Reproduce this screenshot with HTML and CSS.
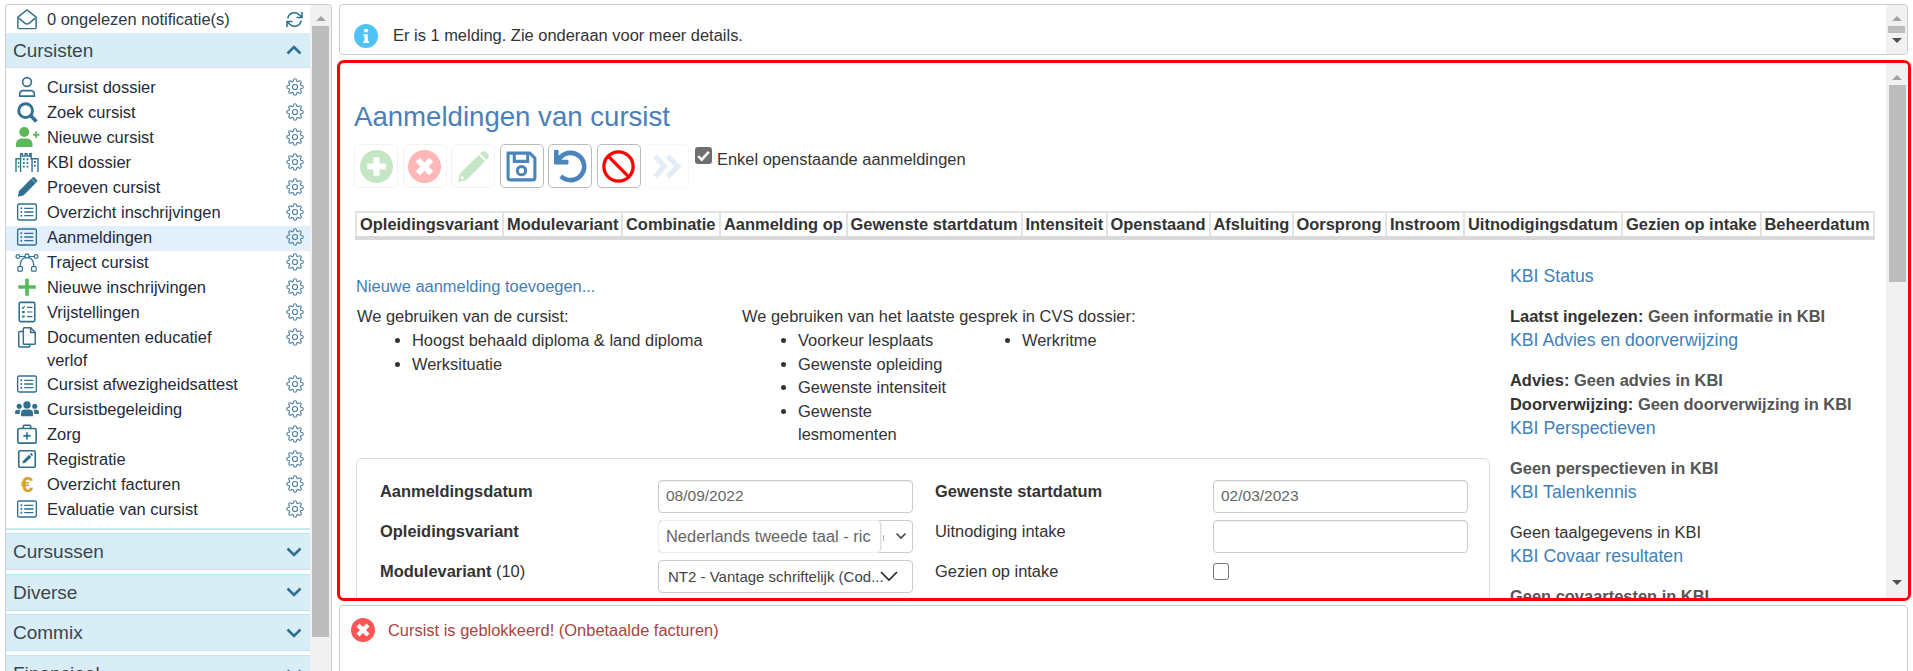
FILE: index.html
```html
<!DOCTYPE html>
<html lang="nl">
<head>
<meta charset="utf-8">
<title>Aanmeldingen van cursist</title>
<link rel="stylesheet" href="styles.css">
</head>
<body>
<svg class="defs" width="0" height="0" aria-hidden="true">
  <symbol id="gear" viewBox="0 0 24 24"><g fill="none" stroke="currentColor" stroke-width="1.5"><circle cx="12" cy="12" r="3.4"/><path d="M19.4 15a1.65 1.65 0 0 0 .33 1.82l.06.06a2 2 0 0 1 0 2.83 2 2 0 0 1-2.83 0l-.06-.06a1.65 1.65 0 0 0-1.82-.33 1.65 1.65 0 0 0-1 1.51V21a2 2 0 0 1-2 2 2 2 0 0 1-2-2v-.09A1.65 1.65 0 0 0 9 19.4a1.65 1.65 0 0 0-1.82.33l-.06.06a2 2 0 0 1-2.83 0 2 2 0 0 1 0-2.83l.06-.06a1.65 1.65 0 0 0 .33-1.82 1.65 1.65 0 0 0-1.51-1H3a2 2 0 0 1-2-2 2 2 0 0 1 2-2h.09A1.65 1.65 0 0 0 4.6 9a1.65 1.65 0 0 0-.33-1.82l-.06-.06a2 2 0 0 1 0-2.83 2 2 0 0 1 2.83 0l.06.06a1.65 1.65 0 0 0 1.82.33H9a1.65 1.65 0 0 0 1-1.51V3a2 2 0 0 1 2-2 2 2 0 0 1 2 2v.09a1.65 1.65 0 0 0 1 1.51 1.65 1.65 0 0 0 1.82-.33l.06-.06a2 2 0 0 1 2.83 0 2 2 0 0 1 0 2.83l-.06.06a1.65 1.65 0 0 0-.33 1.82V9a1.65 1.65 0 0 0 1.51 1H21a2 2 0 0 1 2 2 2 2 0 0 1-2 2h-.09a1.65 1.65 0 0 0-1.51 1z"/></g></symbol>
  <symbol id="list" viewBox="0 0 24 24"><g fill="none" stroke="currentColor" stroke-width="1.5"><rect x="1.8" y="3.3" width="20.4" height="17.4" rx="1.6"/><path d="M9 8h10M9 12h10M9 16h10"/></g><g fill="currentColor"><circle cx="5.8" cy="8" r="1.1"/><circle cx="5.8" cy="12" r="1.1"/><circle cx="5.8" cy="16" r="1.1"/></g></symbol>
  <symbol id="chev-up" viewBox="0 0 16 10"><path d="M1.5 8.5 8 2l6.500 6.500" fill="none" stroke="currentColor" stroke-width="2.6"/></symbol>
  <symbol id="chev-down" viewBox="0 0 16 10"><path d="M1.5 1.5 8 8l6.500-6.500" fill="none" stroke="currentColor" stroke-width="2.6"/></symbol>
</svg>

<div class="app">
  <aside class="side">
    <div class="side-body">
      <div class="notif">
        <svg class="ic" viewBox="0 0 24 24"><g fill="none" stroke="currentColor" stroke-width="1.6"><path d="M2 10 12 2l10 8v11a1.500 1.500 0 0 1-1.500 1.500h-17A1.500 1.500 0 0 1 2 21z"/><path d="M3 11l6.500 5.500c1.500 1.200 3.500 1.200 5 0L21 11"/></g></svg>
        <span class="grow">0 ongelezen notificatie(s)</span>
        <svg class="sync" viewBox="0 0 24 24"><g fill="none" stroke="currentColor" stroke-width="2"><path d="M3.500 10.500A8.600 8.600 0 0 1 18 6l3 3"/><path d="M21.500 2.500V9.500h-7"/><path d="M20.500 13.500A8.600 8.600 0 0 1 6 18l-3-3"/><path d="M2.500 21.500V14.500h7"/></g></svg>
      </div>
      <div class="acc-head first"><span class="grow">Cursisten</span><svg class="chev"><use href="#chev-up"/></svg></div>
      <ul class="menu">
        <li class="item"><svg class="ic" viewBox="0 0 24 24"><g fill="none" stroke="currentColor" stroke-width="1.8"><circle cx="12" cy="6.500" r="4.800"/><path d="M4 22v-2.300A3.700 3.700 0 0 1 7.700 16h8.600a3.700 3.700 0 0 1 3.700 3.700V22z"/></g></svg><span class="grow">Cursist dossier</span><svg class="gear"><use href="#gear"/></svg></li>
        <li class="item"><svg class="ic" viewBox="0 0 24 24"><g fill="none" stroke="currentColor"><circle cx="10.500" cy="10.500" r="7.500" stroke-width="3.200"/><path d="M15.800 15.800l6.500 6.500" stroke-width="4"/></g></svg><span class="grow">Zoek cursist</span><svg class="gear"><use href="#gear"/></svg></li>
        <li class="item"><svg class="ic wide green" viewBox="0 0 26 24"><g fill="currentColor"><circle cx="10" cy="6.500" r="5.500"/><path d="M1 23v-3.500A6 6 0 0 1 7 13.500h6a6 6 0 0 1 6 6V23z"/><path d="M19.500 8.500h2.500V6h2v2.500h2.500v2H24V13h-2v-2.500h-2.500z"/></g></svg><span class="grow">Nieuwe cursist</span><svg class="gear"><use href="#gear"/></svg></li>
        <li class="item"><svg class="ic wide" viewBox="0 0 26 24"><g fill="none" stroke="currentColor" stroke-width="1.500"><path d="M1 23V8.500h5V3h2v2.500h3V3h2v2.500h3V3h1.500v5.500H25V23"/><path d="M6 8.500V23M18.500 8.500V23"/></g><path fill="currentColor" d="M8.500 8h2v2h-2zM12.500 8h2v2h-2zM8.500 12h2v2h-2zM12.500 12h2v2h-2zM8.500 16h2v2h-2zM12.500 16h2v2h-2zM3 12h1.500v2H3zM3 16h1.500v2H3zM20.500 11h2v2h-2zM20.500 15h2v2h-2z"/></svg><span class="grow">KBI dossier</span><svg class="gear"><use href="#gear"/></svg></li>
        <li class="item"><svg class="ic" viewBox="0 0 24 24"><path fill="currentColor" d="M2 22.500l1.300-6.200L16.500 3.100l4.900 4.900L8.200 21.200z"/><path fill="currentColor" d="M17.700 1.900a2 2 0 0 1 2.800 0l2.100 2.100a2 2 0 0 1 0 2.800l-.9.900-4.900-4.900z"/></svg><span class="grow">Proeven cursist</span><svg class="gear"><use href="#gear"/></svg></li>
        <li class="item"><svg class="ic"><use href="#list"/></svg><span class="grow">Overzicht inschrijvingen</span><svg class="gear"><use href="#gear"/></svg></li>
        <li class="item active"><svg class="ic"><use href="#list"/></svg><span class="grow">Aanmeldingen</span><svg class="gear"><use href="#gear"/></svg></li>
        <li class="item"><svg class="ic wide" viewBox="0 0 26 24"><g fill="none" stroke="currentColor" stroke-width="1.300"><rect x="1" y="4" width="4" height="4" rx="2"/><rect x="21" y="4" width="4" height="4" rx="2"/><rect x="11" y="3.500" width="4" height="4" rx="1"/><rect x="3" y="17" width="5" height="5" rx="1"/><rect x="18" y="17" width="5" height="5" rx="1"/><path d="M5 6h6M15 6h6M5.500 17c0-5 2.500-9 6-10M20.500 17c0-5-2.500-9-6-10"/></g></svg><span class="grow">Traject cursist</span><svg class="gear"><use href="#gear"/></svg></li>
        <li class="item"><svg class="ic green" viewBox="0 0 24 24"><path fill="currentColor" d="M10 3h4v7h7.500v4H14v7.500h-4V14H2.500v-4H10z"/></svg><span class="grow">Nieuwe inschrijvingen</span><svg class="gear"><use href="#gear"/></svg></li>
        <li class="item"><svg class="ic" viewBox="0 0 24 24"><g fill="none" stroke="currentColor" stroke-width="1.700"><rect x="3.500" y="1.500" width="17" height="21" rx="1.500"/><path stroke-width="1.300" d="M12 7h6M12 12h6M12 17h6M6.500 7l1 1 2-2.200"/></g><path fill="currentColor" d="M6.500 11h3v2h-3zM6.500 16h3v2h-3z"/></svg><span class="grow">Vrijstellingen</span><svg class="gear"><use href="#gear"/></svg></li>
        <li class="item tall"><svg class="ic" viewBox="0 0 24 24"><g fill="none" stroke="currentColor" stroke-width="1.600"><path d="M9 2h7l5 5v12a1 1 0 0 1-1 1H9a1 1 0 0 1-1-1V3a1 1 0 0 1 1-1z"/><path d="M16 2v5h5M8 6H4a1 1 0 0 0-1 1v15a1 1 0 0 0 1 1h10a1 1 0 0 0 1-1v-2"/></g></svg><span class="grow">Documenten educatief verlof</span><svg class="gear"><use href="#gear"/></svg></li>
        <li class="item"><svg class="ic"><use href="#list"/></svg><span class="grow">Cursist afwezigheidsattest</span><svg class="gear"><use href="#gear"/></svg></li>
        <li class="item"><svg class="ic wide" viewBox="0 0 26 24"><g fill="currentColor"><circle cx="13" cy="7.500" r="4"/><circle cx="4.500" cy="9" r="2.800"/><circle cx="21.500" cy="9" r="2.800"/><path d="M6.500 20v-3.500a4 4 0 0 1 4-4h5a4 4 0 0 1 4 4V20z"/><path d="M0 17.500v-2A2.800 2.800 0 0 1 2.800 12.700H6a6 6 0 0 0-1 3.800v1zM26 17.500v-2a2.800 2.800 0 0 0-2.800-2.800H20a6 6 0 0 1 1 3.800v1z"/></g></svg><span class="grow">Cursistbegeleiding</span><svg class="gear"><use href="#gear"/></svg></li>
        <li class="item"><svg class="ic" viewBox="0 0 24 24"><g fill="none" stroke="currentColor" stroke-width="1.800"><rect x="2" y="6" width="20" height="16" rx="1.500"/><path d="M8 6V3.500A1 1 0 0 1 9 2.500h6a1 1 0 0 1 1 1V6M12 10v8M8 14h8"/></g></svg><span class="grow">Zorg</span><svg class="gear"><use href="#gear"/></svg></li>
        <li class="item"><svg class="ic" viewBox="0 0 24 24"><rect x="3" y="3" width="18" height="18" rx="1.500" fill="none" stroke="currentColor" stroke-width="1.800"/><path fill="currentColor" d="M7 17l.8-3.200 6.500-6.500 2.400 2.400-6.500 6.500zM15 6.600l.7-.7a1 1 0 0 1 1.400 0l1 1a1 1 0 0 1 0 1.400l-.7.7z"/></svg><span class="grow">Registratie</span><svg class="gear"><use href="#gear"/></svg></li>
        <li class="item"><span class="euro">€</span><span class="grow">Overzicht facturen</span><svg class="gear"><use href="#gear"/></svg></li>
        <li class="item"><svg class="ic"><use href="#list"/></svg><span class="grow">Evaluatie van cursist</span><svg class="gear"><use href="#gear"/></svg></li>
      </ul>
      <div class="acc-head"><span class="grow">Cursussen</span><svg class="chev"><use href="#chev-down"/></svg></div>
      <div class="acc-head"><span class="grow">Diverse</span><svg class="chev"><use href="#chev-down"/></svg></div>
      <div class="acc-head"><span class="grow">Commix</span><svg class="chev"><use href="#chev-down"/></svg></div>
      <div class="acc-head"><span class="grow">Financieel</span><svg class="chev"><use href="#chev-down"/></svg></div>
    </div>
    <div class="sbar sbar-side"><i class="arrow-up"></i><b class="thumb"></b></div>
  </aside>

  <main class="main">
    <section class="panel info">
      <div class="info-body">
        <svg class="status" viewBox="0 0 24 24"><circle cx="12" cy="12" r="12" fill="#4fc3f7"/><path fill="#fff" d="M10.200 5h3.600v3.200h-3.600zM9.300 10.200h4.500v6.800h1.200v2H9.300v-2h1.200v-4.800H9.300z"/></svg>
        <span>Er is 1 melding. Zie onderaan voor meer details.</span>
      </div>
      <div class="sbar sbar-info"><i class="arrow-up"></i><b class="thumb"></b><i class="arrow-down"></i></div>
    </section>

    <section class="red">
      <div class="red-body">
        <h1 class="title">Aanmeldingen van cursist</h1>
        <div class="toolbar">
          <button class="tool off"><svg viewBox="0 0 32 32"><circle cx="16" cy="16" r="16" fill="#5cb85c"/><path fill="#fff" d="M13 7h6v6h6v6h-6v6h-6v-6H7v-6h6z"/></svg></button>
          <button class="tool off"><svg viewBox="0 0 32 32"><circle cx="16" cy="16" r="16" fill="#ff3333"/><path fill="#fff" d="M11.500 7.500 16 12l4.500-4.500 4 4L20 16l4.500 4.500-4 4L16 20l-4.500 4.500-4-4L12 16l-4.500-4.500z"/></svg></button>
          <button class="tool off"><svg viewBox="0 0 32 32"><path fill="#5cb85c" d="M1 31l1.800-8L21 4.800l6.200 6.200L9 29.200zM22.500 3.300l1.500-1.500a2.500 2.500 0 0 1 3.500 0l2.700 2.700a2.500 2.500 0 0 1 0 3.500l-1.500 1.500z"/><path fill="#fff" d="M4.300 24.500l3.200 3.200-3.900.9z"/></svg></button>
          <button class="tool"><svg viewBox="0 0 32 32"><g fill="none" stroke="#4a86bb" stroke-width="3"><path d="M3 3h21l5 5v19a2 2 0 0 1-2 2H5a2 2 0 0 1-2-2z"/><path d="M9 3v8h13V3"/><circle cx="16" cy="20" r="4"/></g></svg></button>
          <button class="tool"><svg viewBox="0 0 512 512"><path fill="#4a86bb" d="M212.333 224.333H12c-6.627 0-12-5.373-12-12V12C0 5.373 5.373 0 12 0h48c6.627 0 12 5.373 12 12v78.112C117.773 39.279 184.26 7.47 258.175 8.007c136.906.994 246.448 111.623 246.157 248.532C504.041 393.258 393.12 504 256.333 504c-64.089 0-122.496-24.313-166.51-64.215-5.099-4.622-5.334-12.554-.467-17.42l33.967-33.967c4.474-4.474 11.662-4.717 16.401-.525C170.76 415.336 211.58 432 256.333 432c97.268 0 176-78.716 176-176 0-97.267-78.716-176-176-176-58.496 0-110.28 28.476-142.274 72.333h98.274c6.627 0 12 5.373 12 12v48c0 6.627-5.373 12-12 12z"/></svg></button>
          <button class="tool"><svg viewBox="0 0 32 32"><g fill="none" stroke="#f00" stroke-width="3.200"><circle cx="16" cy="16" r="14.200"/><path d="M6 6l20 20"/></g></svg></button>
          <button class="tool off"><svg viewBox="0 0 32 32"><g fill="none" stroke="#7da7d0" stroke-width="5"><path d="M4 6l9 10-9 10"/><path d="M16 6l10 10-10 10"/></g></svg></button>
          <span class="tick"><svg viewBox="0 0 16 16"><path d="M3 8.500l3.300 3.300L13 4.500" fill="none" stroke="#fff" stroke-width="2.400"/></svg></span>
          <span class="tick-label">Enkel openstaande aanmeldingen</span>
        </div>
        <table class="grid">
          <thead>
            <tr>
              <th>Opleidingsvariant</th><th>Modulevariant</th><th>Combinatie</th><th>Aanmelding op</th><th>Gewenste startdatum</th><th>Intensiteit</th><th>Openstaand</th><th>Afsluiting</th><th>Oorsprong</th><th>Instroom</th><th>Uitnodigingsdatum</th><th>Gezien op intake</th><th>Beheerdatum</th>
            </tr>
          </thead>
        </table>
        <div class="split">
          <div class="left">
            <a class="add" href="#">Nieuwe aanmelding toevoegen...</a>
            <div class="usage">
              <div class="usage-a">
                <p>We gebruiken van de cursist:</p>
                <ul><li>Hoogst behaald diploma &amp; land diploma</li><li>Werksituatie</li></ul>
              </div>
              <div class="usage-b">
                <p>We gebruiken van het laatste gesprek in CVS dossier:</p>
                <div class="usage-cols">
                  <ul><li>Voorkeur lesplaats</li><li>Gewenste opleiding</li><li>Gewenste intensiteit</li><li>Gewenste lesmomenten</li></ul>
                  <ul><li>Werkritme</li></ul>
                </div>
              </div>
            </div>
            <form class="box">
              <label class="lbl strong">Aanmeldingsdatum</label>
              <input class="ctl" value="08/09/2022">
              <label class="lbl lbl-r strong">Gewenste startdatum</label>
              <input class="ctl" value="02/03/2023">
              <label class="lbl strong">Opleidingsvariant</label>
              <div class="combo"><span class="combo-in">Nederlands tweede taal - ric</span><i class="combo-rest"></i><svg class="combo-ch" viewBox="0 0 12 8"><path d="M1.500 1.500 6 6l4.500-4.500" fill="none" stroke="#444" stroke-width="1.600"/></svg></div>
              <label class="lbl lbl-r">Uitnodiging intake</label>
              <input class="ctl" value="">
              <label class="lbl"><b>Modulevariant</b> (10)</label>
              <div class="sel"><span>NT2 - Vantage schriftelijk (Cod...</span><svg class="sel-ch" viewBox="0 0 18 11"><path d="M1 1l8 8 8-8" fill="none" stroke="#222" stroke-width="1.600"/></svg></div>
              <label class="lbl lbl-r">Gezien op intake</label>
              <span class="check"></span>
            </form>
          </div>
          <div class="right">
            <a class="kbi" href="#">KBI Status</a>
            <p class="muted"><b class="dark">Laatst ingelezen:</b> <b>Geen informatie in KBI</b></p>
            <a class="kbi" href="#">KBI Advies en doorverwijzing</a>
            <p class="muted"><b class="dark">Advies:</b> <b>Geen advies in KBI</b></p>
            <p class="muted"><b class="dark">Doorverwijzing:</b> <b>Geen doorverwijzing in KBI</b></p>
            <a class="kbi" href="#">KBI Perspectieven</a>
            <p class="muted"><b>Geen perspectieven in KBI</b></p>
            <a class="kbi" href="#">KBI Talenkennis</a>
            <p>Geen taalgegevens in KBI</p>
            <a class="kbi" href="#">KBI Covaar resultaten</a>
            <p class="muted"><b>Geen covaartesten in KBI</b></p>
          </div>
        </div>
      </div>
      <div class="sbar sbar-red"><i class="arrow-up"></i><b class="thumb"></b><span class="grow"></span><i class="arrow-down"></i></div>
    </section>

    <section class="panel err">
      <svg class="status" viewBox="0 0 24 24"><circle cx="12" cy="12" r="12" fill="#ff5555"/><path fill="#fff" d="M8.500 5.500 12 9l3.500-3.500 3 3L15 12l3.500 3.500-3 3L12 15l-3.500 3.500-3-3L9 12 5.500 8.500z"/></svg>
      <span class="err-text">Cursist is geblokkeerd! (Onbetaalde facturen)</span>
    </section>
  </main>
</div>
</body>
</html>
```
FILE: styles.css
```css
* { box-sizing: border-box; }
html, body { margin: 0; height: 671px; overflow: hidden; }
body { background: #fff; color: #333; font: 16.45px/23px "Liberation Sans", Arial, sans-serif; }
.defs { position: absolute; }
.grow { flex: 1 1 auto; min-width: 0; }
p { margin: 0; }
ul { margin: 0; padding: 0; list-style: none; }
a { color: #3f7fb8; text-decoration: none; }

.app { display: flex; height: 671px; padding: 4px 0 0 5px; }

/* sidebar */
.side { width: 327px; flex: none; display: flex; height: 680px; border: 1px solid #ccc; border-bottom: 0; border-radius: 4px 4px 0 0; background: #fff; overflow: hidden; }
.side-body { width: 304px; flex: none; }
.notif { display: flex; align-items: center; height: 28px; padding: 0 6px 0 10px; color: #2b3a48; }
.ic { width: 22px; height: 22px; flex: none; margin-right: 9px; color: #31708f; }
.ic.wide { width: 26px; margin-left: -2px; margin-right: 7px; }
.green { color: #5cb85c; }
.sync { width: 19px; height: 19px; color: #31708f; flex: none; }

.acc-head { display: flex; align-items: center; height: 37px; margin-bottom: 3.7px; padding: 0 7px; background: #d9edf7; border: solid #bce8f1; border-width: 1px 0; font-size: 19px; color: #3c4549; }
.acc-head.first { height: 35px; margin: 0; border: 0; border-bottom: 1px solid #ddd; }
.chev { width: 16px; height: 10px; flex: none; color: #2f6f93; margin-right: 1px; }

.menu { padding: 8px 0 5px; margin-bottom: 3px; border-bottom: 2px solid #c7e9f3; }
.item { display: flex; align-items: flex-start; min-height: 25px; padding: 0 7px 0 10px; color: #1f2a38; }
.item.tall { padding-bottom: 1px; }
.item .grow { padding-right: 35px; }
.item.active { background: #e3effb; }
.euro { width: 22px; flex: none; margin-right: 9px; text-align: center; font-size: 22px; font-weight: 700; color: #d9a02c; }
.gear { width: 18px; height: 18px; flex: none; margin: 2px -1px 0; color: #4d7f9e; }

/* scrollbars */
.sbar { display: flex; flex-direction: column; align-items: center; width: 21px; flex: none; background: #f1f1f1; }
.thumb { display: block; width: 17px; background: #bcbcbc; }
.arrow-up, .arrow-down { display: block; width: 0; height: 0; border: 5px solid transparent; }
.arrow-up { border-top: 0; border-bottom: 5px solid #a3a3a3; }
.arrow-down { border-bottom: 0; border-top: 5px solid #505050; }
.sbar-side { padding-top: 11px; }
.sbar-side .thumb { height: 611px; margin-top: 5px; }
.sbar-info { padding-top: 11px; }
.sbar-info .thumb { height: 7px; margin: 5px 0; }
.sbar-red { padding: 12px 0 13px; width: 22px; }
.sbar-red .thumb { height: 197px; margin-top: 5px; }

/* main */
.main { width: 1574px; margin-left: 5px; flex: none; }
.panel { margin: 0 3px 0 2px; border: 1px solid #ccc; border-radius: 4px; background: #fff; }
.info { display: flex; height: 51px; margin-bottom: 5px; overflow: hidden; }
.info-body { flex: 1 1 auto; display: flex; align-items: center; padding: 12px 0 0 14px; gap: 15px; }
.status { width: 24px; height: 24px; flex: none; }
.red { display: flex; height: 541px; border: 3px solid #f00; border-radius: 7px; overflow: hidden; background: #fff; }
.red-body { flex: 1 1 auto; min-width: 0; padding: 37px 0 0 14px; overflow: hidden; }
.title { margin: 0; font-size: 27.6px; line-height: 34px; font-weight: 400; color: #4a80ba; }
.toolbar { display: flex; align-items: flex-start; gap: 4.5px; margin-top: 10px; height: 44px; }
.tool { display: flex; align-items: center; justify-content: center; width: 44px; height: 44px; padding: 0; border: 1px solid #bbb; border-radius: 5px; background: #fff; }
.tool svg { width: 33px; height: 33px; }
.tool.off { border-color: #ddd; opacity: .35; }
.tool.off:nth-child(7) { opacity: .2; }
.tick { display: block; width: 17px; height: 17px; margin: 3px 0 0 1px; border-radius: 3px; background: #6f6f6f; }
.tick svg { display: block; }
.tick-label { margin: 4px 0 0 1px; }

.grid { width: 1518px; margin: 23px 0 0 1px; border-collapse: collapse; table-layout: fixed; }
.grid th { padding: 0 0 0 3px; border: 2px solid #e3e3e3; border-bottom: 4px solid #d9d9d9; white-space: nowrap; font-weight: 700; line-height: 23px; text-align: left; }
.grid th:nth-child(1) { width: 147px; }
.grid th:nth-child(2) { width: 119px; }
.grid th:nth-child(3) { width: 98px; }
.grid th:nth-child(4) { width: 126.5px; }
.grid th:nth-child(5) { width: 175px; }
.grid th:nth-child(6) { width: 85px; }
.grid th:nth-child(7) { width: 103px; }
.grid th:nth-child(8) { width: 83px; }
.grid th:nth-child(9) { width: 93.5px; }
.grid th:nth-child(10) { width: 78px; }
.grid th:nth-child(11) { width: 158px; }
.grid th:nth-child(12) { width: 138.5px; }
.grid th:nth-child(13) { width: 113.5px; }

.split { display: flex; }
.left { width: 1136px; flex: none; padding: 34px 0 0 2px; }
.add { display: block; height: 24px; line-height: 24px; }
.usage { display: flex; margin-top: 7px; }
.usage-a { width: 386px; flex: none; padding-left: 1px; }
.usage-a ul { padding-left: 55px; }
.usage ul { margin-top: 1px; list-style: disc; }
.usage-b ul { padding-left: 56px; width: 224px; }
.usage li { line-height: 23.600px; }
.usage-cols { display: flex; }
.box { display: grid; grid-template-columns: 278px 255px 300px 255px; grid-auto-rows: 33px; row-gap: 7px; width: 1134px; margin-top: 11px; padding: 21px 0 30px 23px; border: 1px solid #ddd; border-radius: 6px; }
.lbl { line-height: 22px; }
.lbl-r { padding-left: 22px; }
.strong, .lbl b { font-weight: 700; }
.ctl { height: 33px; padding: 2px 7px; border: 1px solid #ccc; border-radius: 4px; font: 15.5px "Liberation Sans", Arial, sans-serif; color: #666; box-shadow: inset 0 1px 1px rgba(0,0,0,.075); }
.combo { display: flex; align-items: center; height: 33px; border: 1px solid #ccc; border-radius: 4px; }
.combo-in { width: 222px; height: 31px; padding-left: 7px; border-right: 1px solid #ddd; border-radius: 4px; color: #666; line-height: 31px; white-space: nowrap; overflow: hidden; box-shadow: 0 0 0 1px #eee; }
.combo-rest { display: block; width: 1px; height: 6px; margin: 4px 0 0 2px; background: #aaa; }
.combo-ch { width: 12px; height: 8px; margin-left: 11px; }
.sel { display: flex; align-items: center; height: 33px; padding-left: 9px; border: 1px solid #ccc; border-radius: 4px; font-size: 15px; color: #444; white-space: nowrap; overflow: hidden; }
.sel-ch { width: 18px; height: 11px; flex: none; margin-left: -4px; }
.check { display: block; width: 16px; height: 17px; margin-top: 3px; border: 1px solid #767676; border-radius: 3px; background: #fff; }

.right { flex: 1 1 auto; min-width: 0; padding-top: 24px; margin-left: 20px; white-space: nowrap; }
.right p { line-height: 24px; }
.kbi { display: block; height: 24px; font-size: 17.7px; line-height: 24px; margin-bottom: 16px; }
.muted { color: #555; }
.dark { color: #333; }

.err { display: flex; align-items: center; height: 90px; margin-top: 4px; padding: 0 0 40px 11px; gap: 13px; }
.err .status { width: 24px; height: 24px; }
.err-text { color: #a94442; }
```
